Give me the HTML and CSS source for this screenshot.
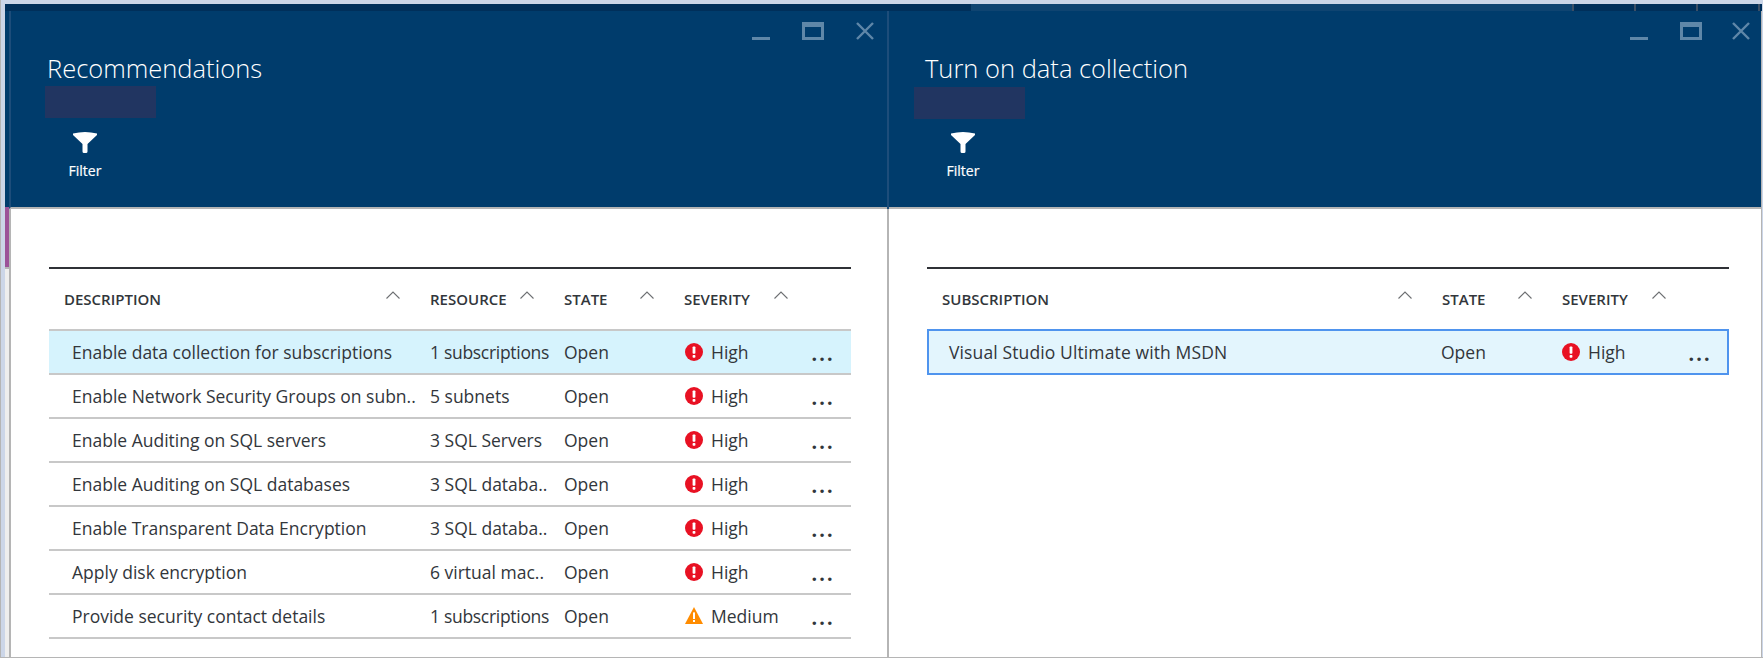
FILE: index.html
```html
<!DOCTYPE html>
<html lang="en">
<head>
    <meta charset="UTF-8">
    <meta name="viewport" content="width=device-width, initial-scale=1.0">
    <title>Recommendations</title>
    <link rel="stylesheet" href="styles.css">
</head>
<body>

    <svg class="defs" width="0" height="0">
        <symbol id="icon-high" viewBox="0 0 18 18">
            <circle cx="9" cy="9" r="9" fill="#e81123"/>
            <rect x="7.6" y="3.4" width="2.8" height="7.4" rx="0.8" fill="#fff"/>
            <rect x="7.6" y="12" width="2.8" height="2.8" rx="0.8" fill="#fff"/>
        </symbol>
        <symbol id="icon-medium" viewBox="0 0 18 18">
            <path d="M9 0 L18 17 L0 17 Z" fill="#ff8c00"/>
            <rect x="8" y="5.4" width="2" height="6.6" fill="#fff"/>
            <rect x="8" y="13" width="2" height="2" fill="#fff"/>
        </symbol>
        <symbol id="icon-filter" viewBox="0 0 24 21">
            <path d="M0 1.500 Q12 -1.500 24 1.500 L24 3 L14.500 12 L14.500 19.500 Q14.500 21 13 21 L11 21 Q9.500 21 9.500 19.500 L9.500 12 L0 3 Z" fill="#fff"/>
        </symbol>
        <symbol id="icon-sort" viewBox="0 0 14 8">
            <path d="M0.500 7.500 L7 1 L13.500 7.500" fill="none" stroke="#6d6f72" stroke-width="1.1"/>
        </symbol>
    </svg>

    <div class="tabbar">
        <div class="tab tab-dark"></div>
        <div class="tab tab-active"></div>
        <div class="tab tab-small"></div>
        <div class="tab tab-small"></div>
        <div class="tab tab-small"></div>
        <div class="tab tab-end"></div>
    </div>

    <div class="blades">

        <section class="blade blade-left">
            <header class="blade-head">
                <div class="win-controls">
                    <span class="win-min"></span>
                    <span class="win-max"></span>
                    <svg class="win-close" viewBox="0 0 18 18"><path d="M1 1 L17 17 M17 1 L1 17" stroke="#5f87a8" stroke-width="2.400" fill="none"/></svg>
                </div>
                <h1>Recommendations</h1>
                <div class="redacted"></div>
                <div class="command">
                    <svg class="filter-icon"><use href="#icon-filter"/></svg>
                    <span>Filter</span>
                </div>
            </header>
            <div class="blade-body">
                <div class="grid grid-recs">
                    <div class="row head-row">
                        <div class="cell cell-first">DESCRIPTION<svg class="sort"><use href="#icon-sort"/></svg></div>
                        <div class="cell">RESOURCE<svg class="sort"><use href="#icon-sort"/></svg></div>
                        <div class="cell">STATE<svg class="sort"><use href="#icon-sort"/></svg></div>
                        <div class="cell">SEVERITY<svg class="sort sort-last"><use href="#icon-sort"/></svg></div>
                        <div class="cell"></div>
                    </div>
                    <div class="row data-row hilite">
                        <div class="cell cell-first">Enable data collection for subscriptions</div>
                        <div class="cell cell-tight">1 subscriptions</div>
                        <div class="cell">Open</div>
                        <div class="cell sev"><svg class="sev-icon"><use href="#icon-high"/></svg>High</div>
                        <div class="cell more">...</div>
                    </div>
                    <div class="row data-row">
                        <div class="cell cell-first">Enable Network Security Groups on subn..</div>
                        <div class="cell">5 subnets</div>
                        <div class="cell">Open</div>
                        <div class="cell sev"><svg class="sev-icon"><use href="#icon-high"/></svg>High</div>
                        <div class="cell more">...</div>
                    </div>
                    <div class="row data-row">
                        <div class="cell cell-first">Enable Auditing on SQL servers</div>
                        <div class="cell">3 SQL Servers</div>
                        <div class="cell">Open</div>
                        <div class="cell sev"><svg class="sev-icon"><use href="#icon-high"/></svg>High</div>
                        <div class="cell more">...</div>
                    </div>
                    <div class="row data-row">
                        <div class="cell cell-first">Enable Auditing on SQL databases</div>
                        <div class="cell">3 SQL databa..</div>
                        <div class="cell">Open</div>
                        <div class="cell sev"><svg class="sev-icon"><use href="#icon-high"/></svg>High</div>
                        <div class="cell more">...</div>
                    </div>
                    <div class="row data-row">
                        <div class="cell cell-first">Enable Transparent Data Encryption</div>
                        <div class="cell">3 SQL databa..</div>
                        <div class="cell">Open</div>
                        <div class="cell sev"><svg class="sev-icon"><use href="#icon-high"/></svg>High</div>
                        <div class="cell more">...</div>
                    </div>
                    <div class="row data-row">
                        <div class="cell cell-first">Apply disk encryption</div>
                        <div class="cell">6 virtual mac..</div>
                        <div class="cell">Open</div>
                        <div class="cell sev"><svg class="sev-icon"><use href="#icon-high"/></svg>High</div>
                        <div class="cell more">...</div>
                    </div>
                    <div class="row data-row">
                        <div class="cell cell-first">Provide security contact details</div>
                        <div class="cell cell-tight">1 subscriptions</div>
                        <div class="cell">Open</div>
                        <div class="cell sev"><svg class="sev-icon"><use href="#icon-medium"/></svg>Medium</div>
                        <div class="cell more">...</div>
                    </div>
                </div>
            </div>
        </section>

        <section class="blade blade-right">
            <header class="blade-head">
                <div class="win-controls">
                    <span class="win-min"></span>
                    <span class="win-max"></span>
                    <svg class="win-close" viewBox="0 0 18 18"><path d="M1 1 L17 17 M17 1 L1 17" stroke="#5f87a8" stroke-width="2.400" fill="none"/></svg>
                </div>
                <h1>Turn on data collection</h1>
                <div class="redacted"></div>
                <div class="command">
                    <svg class="filter-icon"><use href="#icon-filter"/></svg>
                    <span>Filter</span>
                </div>
            </header>
            <div class="blade-body">
                <div class="grid grid-subs">
                    <div class="row head-row">
                        <div class="cell cell-first">SUBSCRIPTION<svg class="sort"><use href="#icon-sort"/></svg></div>
                        <div class="cell">STATE<svg class="sort"><use href="#icon-sort"/></svg></div>
                        <div class="cell">SEVERITY<svg class="sort sort-last"><use href="#icon-sort"/></svg></div>
                        <div class="cell"></div>
                    </div>
                    <div class="row data-row selected">
                        <div class="cell cell-first">Visual Studio Ultimate with MSDN</div>
                        <div class="cell">Open</div>
                        <div class="cell sev"><svg class="sev-icon"><use href="#icon-high"/></svg>High</div>
                        <div class="cell more">...</div>
                    </div>
                </div>
            </div>
        </section>

    </div>

</body>
</html>
```

FILE: styles.css
```css
* {
    box-sizing: border-box;
}

html, body {
    margin: 0;
    height: 658px;
    overflow: hidden;
}

body {
    background-color: #ccd6e8;
    padding: 4px 1px 0 4px;
    border-left: 1px solid #b5b5b5;
    border-bottom: 1px solid #b5b5b5;
    font-family: "Open Sans", "Noto Sans", sans-serif;
    color: #32363b;
}

.defs {
    display: block;
    height: 0;
}

/* strip of portal tabs over the blades */
.tabbar {
    display: flex;
    height: 7px;
    background-color: #3c4f66;
}

.tab-dark {
    width: 966px;
    background-color: #002f5a;
}

.tab-active {
    width: 601px;
    background-color: #0f4471;
}

.tab-small {
    width: 60px;
    margin-left: 2px;
    background-color: #002f5a;
}

.tab-end {
    flex: 1;
    margin-left: 2px;
    background-color: #002f5a;
}

.blades {
    display: flex;
    height: 646px;
}

.blade {
    position: relative;
    display: flex;
    flex-direction: column;
}

/* the 4px edge left of the first blade: header blue, purple tag, then pale */
.blade-left {
    width: 882px;
    padding-left: 4px;
    background: linear-gradient(to bottom, #003c6c 196px, #9c5398 196px, #9c5398 256px, #b5b5b5 256px, #b5b5b5 258px, #eeeeee 258px);
}

.blade-right {
    flex: 1;
    border-left: 2px solid #b5b5b5;
    border-right: 1px solid #b5b5b5;
}

.blade-head {
    position: relative;
    height: 198px;
    padding: 0 0 0 36px;
    background-color: #003c6c;
    border-bottom: 2px solid #b5b5b5;
    color: #fff;
}

.blade-left .blade-head {
    border-left: 2px solid #1d4d7a;
}

.blade-right .blade-head {
    box-shadow: -2px 0 0 #1d4d7a;
}

.blade-head h1 {
    margin: 0;
    padding-top: 39px;
    font-size: 25.5px;
    font-weight: 300;
    line-height: 36px;
    color: #fff;
}

.redacted {
    width: 111px;
    height: 32px;
    margin-left: -2px;
    background-color: #213561;
}

.blade-right .redacted {
    margin-top: 1px;
    margin-bottom: -1px;
    margin-left: -11px;
}

.command {
    display: flex;
    flex-direction: column;
    align-items: center;
    width: 60px;
    margin-top: 14px;
    margin-left: 8px;
    font-size: 14px;
    font-weight: 400;
    -webkit-text-stroke: 0.2px #fff;
}

.filter-icon {
    width: 24px;
    height: 21px;
    margin-bottom: 8px;
}

.win-controls {
    position: absolute;
    top: 11px;
    right: 13px;
    display: flex;
    align-items: flex-end;
    gap: 32px;
}

.blade-right .win-controls {
    right: 11px;
}

.blade-right .win-close {
    margin-left: -2px;
}

.win-min {
    width: 18px;
    height: 3px;
    background-color: #5f87a8;
}

.win-max {
    width: 22px;
    height: 18px;
    border: 3px solid #5f87a8;
    border-top-width: 5px;
}

.win-close {
    width: 18px;
    height: 18px;
}

.blade-body {
    flex: 1;
    background-color: #fff;
    padding: 58px 0 0 38px;
}

.blade-left .blade-body {
    border-left: 2px solid #b5b5b5;
}

.grid {
    width: 802px;
    border-top: 2px solid #2f3136;
}

.row {
    display: grid;
    align-items: center;
}

.grid-recs .row {
    grid-template-columns: 381px 134px 120px 127px 40px;
}

.grid-subs .row {
    grid-template-columns: 515px 120px 127px 40px;
}

.grid-subs .selected {
    grid-template-columns: 512px 120px 127px 39px;
}

.head-row {
    height: 62px;
    padding-bottom: 2px;
    font-size: 15px;
    font-weight: 600;
    line-height: 20px;
}

.data-row {
    height: 46px;
    margin-top: -2px;
    border-top: 2px solid #c8c8c8;
    border-bottom: 2px solid #c8c8c8;
    font-size: 17.5px;
}

.hilite {
    background-color: #d6f3fd;
}

.selected {
    background-color: #e3f5fd;
    border: 2px solid #4f94ee;
}

.cell {
    position: relative;
    white-space: nowrap;
}

.cell-first {
    padding-left: 15px;
}

.cell-tight {
    letter-spacing: -0.3px;
}

.data-row .cell-first {
    padding-left: 23px;
}

.selected .cell-first {
    padding-left: 20px;
    letter-spacing: 0.12px;
}

.sort {
    position: absolute;
    right: 30px;
    top: 2px;
    width: 14px;
    height: 8px;
}

.sort-last {
    right: 23px;
}

.sev {
    display: flex;
    align-items: center;
}

.sev-icon {
    width: 18px;
    height: 18px;
    margin-left: 1px;
    margin-right: 8px;
}

.more {
    font-size: 24px;
    line-height: 24px;
    letter-spacing: 1.2px;
    font-weight: 600;
}
```
